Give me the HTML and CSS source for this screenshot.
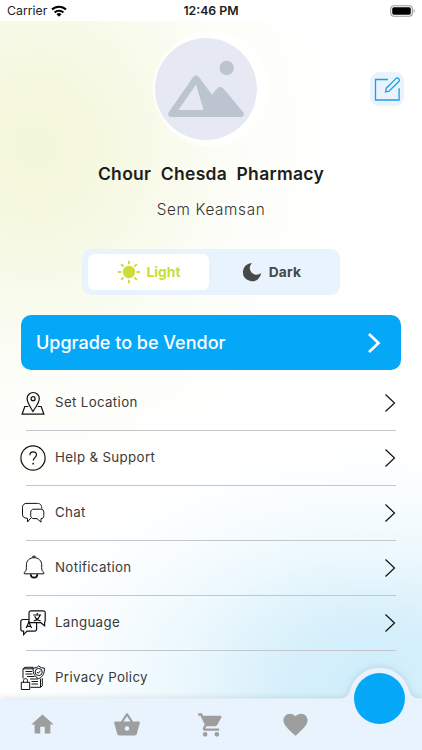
FILE: index.html
```html
<!DOCTYPE html>
<html lang="en" data-theme="light">
<head>
<meta charset="UTF-8" />
<meta name="viewport" content="width=device-width, initial-scale=1" />
<title>Profile</title>
<link rel="stylesheet" href="styles.css">
</head>
<body>
  <header class="status-bar">
    <div class="carrier">
      <span>Carrier</span>
      <svg width="16" height="12" viewBox="0 0 16 12" aria-hidden="true">
        <g fill="none" stroke="#000" stroke-width="2.1">
          <path d="M1 4.6a10 10 0 0 1 14 0"/>
          <path d="M3.6 7.5a6.3 6.3 0 0 1 8.8 0"/>
        </g>
        <path d="M8 11.7 5.5 9.2a3.600 3.600 0 0 1 5 0z"/>
      </svg>
    </div>
    <div class="clock">12:46 PM</div>
    <svg class="battery" width="26" height="12" viewBox="0 0 26 12" aria-hidden="true">
      <rect x=".7" y=".7" width="21.6" height="10.6" rx="3" fill="#fff" stroke="#999" stroke-width="1.1"/>
      <rect x="2.2" y="2.2" width="18.6" height="7.6" rx="1.7"/>
      <path d="M23.6 4v4c1.4-.6 1.4-3.4 0-4z" fill="#999"/>
    </svg>
  </header>

  <main class="content">
    <section class="profile">
      <div class="avatar">
        <svg width="102" height="102" viewBox="0 0 102 102" aria-hidden="true">
          <circle cx="51" cy="51" r="51" fill="#e6e9f3"/>
          <g fill="#bbc4cf">
            <circle cx="71.7" cy="30" r="7.2"/>
            <path fill-rule="evenodd" d="M16.5 79c-3 0-4.3-2.7-2.6-5L38 39.3c1.6-2.4 4.5-2.4 6.1 0L57 56.7l5.3-6.4c1.6-1.9 4.3-1.9 5.9 0L88 74c1.8 2.2.8 5-2.2 5zM23.4 72h25.2L41 46.5z"/>
          </g>
        </svg>
      </div>
      <button class="edit" aria-label="Edit profile">
        <svg width="28" height="28" viewBox="0 0 28 28" aria-hidden="true">
          <path d="M15 4.500H2.500V25h23.600V13.200"/>
          <path d="m12.500 16.800.8-3.600L22.900 3.600c1.800-1.700 4.700.8 2.900 2.900L16 16.100z"/>
        </svg>
      </button>
      <h1>Chour&nbsp; Chesda&nbsp; Pharmacy</h1>
      <p class="owner">Sem Keamsan</p>
    </section>

    <div class="theme-switch">
      <button class="theme light">
        <svg width="24" height="24" viewBox="0 0 24 24" aria-hidden="true">
          <circle cx="12" cy="12" r="6.200" fill="currentColor"/>
          <g stroke="currentColor" stroke-width="1.900" stroke-linecap="round">
            <path d="M12 1.600v2M12 20.400v2M1.600 12h2M20.400 12h2M4.600 4.600 6 6M18 18l1.400 1.400M4.600 19.400 6 18M18 6l1.400-1.400"/>
          </g>
        </svg>
        <span>Light</span>
      </button>
      <button class="theme dark">
        <svg width="20" height="20" viewBox="0 0 20 20" aria-hidden="true">
          <path d="M10 .9a9.200 9.200 0 1 0 9.200 10.200A6.400 6.400 0 0 1 10 .9z" fill="currentColor"/>
        </svg>
        <span>Dark</span>
      </button>
    </div>

    <a class="upgrade" href="#">
      <span>Upgrade to be Vendor</span>
      <svg width="14" height="22" viewBox="0 0 14 22" aria-hidden="true"><path d="m2 2 9.500 9L2 20"/></svg>
    </a>

    <nav class="menu">
      <a href="#">
        <svg class="icon" viewBox="0 0 26 26" aria-hidden="true">
          <path d="M13 21.500C10.500 17 7.100 13 7.100 8.600a6.100 6.100 0 0 1 12.200 0C19.300 13 15.500 17 13 21.500z"/>
          <circle cx="13.100" cy="8.700" r="2"/>
          <path d="M8.300 16.500H4.800L2.100 24.200h21.800l-2.700-7.700h-3.500"/>
        </svg>
        <span>Set Location</span>
        <svg class="chevron" viewBox="0 0 12 20" aria-hidden="true"><path d="m1.500 1.500 9 8.500-9 8.500"/></svg>
      </a>
      <a href="#">
        <svg class="icon" viewBox="0 0 26 26" aria-hidden="true">
          <circle cx="13" cy="13" r="12.100"/>
          <path d="M9.900 10.200c0-4.500 6.600-4.300 6.600-.4 0 2.600-3.200 2.700-3.200 5.800"/>
          <circle class="solid" cx="13.200" cy="18.700" r=".9"/>
        </svg>
        <span>Help &amp; Support</span>
        <svg class="chevron" viewBox="0 0 12 20" aria-hidden="true"><path d="m1.500 1.500 9 8.500-9 8.500"/></svg>
      </a>
      <a href="#">
        <svg class="icon thin" viewBox="0 0 26 26" aria-hidden="true">
          <path d="M10.800 18 7.500 22v-3.700c-3.400 0-5-1.300-5-4.100V7.500c0-2.800 1.600-4.100 4.500-4.100h10.500c2.700 0 4.300 1.500 4.300 5.300"/>
          <path d="M14 9.200h6.600c2.100 0 3.200 1 3.200 3v3.400c0 2-.9 3-2.800 3v3.600l-4-3.600h-3c-2.100 0-3.300-1-3.300-3v-3.400c0-2 1.200-3 3.300-3z"/>
        </svg>
        <span>Chat</span>
        <svg class="chevron" viewBox="0 0 12 20" aria-hidden="true"><path d="m1.500 1.500 9 8.500-9 8.500"/></svg>
      </a>
      <a href="#">
        <svg class="icon thin" viewBox="0 0 26 26" aria-hidden="true">
          <path d="M12.800 2.700V1.200h2.400v1.500M4.300 18.800v-1.500c1.800-1.100 2.100-2.500 2.100-4.900V9.900c0-4.300 3.200-7.200 7.600-7.200s7.700 2.900 7.700 7.200v2.500c0 2.400.3 3.800 2.100 4.900v1.500z"/>
          <path class="bold" d="M10.700 19.200c.2 4.500 6.500 4.500 6.700 0"/>
        </svg>
        <span>Notification</span>
        <svg class="chevron" viewBox="0 0 12 20" aria-hidden="true"><path d="m1.500 1.500 9 8.500-9 8.500"/></svg>
      </a>
      <a href="#">
        <svg class="icon" viewBox="0 0 26 26" aria-hidden="true">
          <path d="M16.600 12.700h4.200l3.800 3v-3.500c.5-.4.600-1 .6-1.600V3c0-1.400-.7-2.100-2.200-2.100H11.200C9.700.9 9 1.600 9 3v6.500M9 9.500H3C1.500 9.500.8 10.200.8 11.600V19c0 1.400.7 2.100 2.200 2.100h.6v3.500L7 21.100h7.400c1.500 0 2.200-.7 2.200-2.100v-6.300H9z"/>
          <path d="m6.200 18 2.700-6 2.600 6M7.200 16.300h3.500M13.200 5h8M17.200 3v2M20 5c-.8 3-3 5-6.200 6M14.700 6.200c1 2.400 3 4 6 4.800"/>
        </svg>
        <span>Language</span>
        <svg class="chevron" viewBox="0 0 12 20" aria-hidden="true"><path d="m1.500 1.500 9 8.500-9 8.500"/></svg>
      </a>
      <a href="#">
        <svg class="icon thin" viewBox="0 0 26 26" aria-hidden="true">
          <path d="M3 13.500V3.800h10.500M20.500 13.800v8.500H10.500M3 3.800l2-1.500h8.500M20.500 22.300l1.800-1.500v-7.700"/>
          <path d="M5.500 6.500h6.700M5.500 9h7M7 11.500h7.500M10 14h8M11.500 16.500h6.500M11.500 19h6.500"/>
          <path d="M18.700 1c1.800 1.500 3.500 2 5.700 2.100.2 5-1.300 8.500-5.700 10.600-4.300-2.100-5.800-5.600-5.600-10.600C15.300 3 17 2.500 18.700 1z"/>
          <circle cx="18.700" cy="7" r="3.600"/>
          <path d="m17 7 1.300 1.300 2.300-2.600"/>
          <path class="lock" d="M1.300 17.300h8.400v7.200H1.300zM3.500 17.100v-1.600c0-2.500 4-2.500 4 0v1.600"/>
        </svg>
        <span>Privacy Policy</span>
        <svg class="chevron" viewBox="0 0 12 20" aria-hidden="true"><path d="m1.500 1.500 9 8.500-9 8.500"/></svg>
      </a>
    </nav>
  </main>

  <footer class="tab-bar">
    <svg class="tab-shape" width="422" height="82" viewBox="0 0 422 82" aria-hidden="true">
      <path d="M0 30.500h338c7 0 10-2.500 11.900-7.500a30.500 30.500 0 0 1 59.200 0c1.900 5 5 7.500 12.900 7.500V82H0z"/>
    </svg>
    <a class="tab" href="#" aria-label="Home">
      <svg width="27" height="27" viewBox="0 0 24 24"><path d="M10 20v-6h4v6h5v-8h3L12 3 2 12h3v8z"/></svg>
    </a>
    <a class="tab" href="#" aria-label="Shop">
      <svg width="28" height="28" viewBox="0 0 24 24"><path d="M17.21 9l-4.38-6.56a.99.99 0 0 0-1.66.01L6.79 9H2c-.55 0-1 .45-1 1 0 .09.01.18.04.27l2.54 9.27c.23.84 1 1.46 1.92 1.46h13c.92 0 1.69-.62 1.93-1.46l2.54-9.27L23 10c0-.55-.45-1-1-1zM9 9l3-4.4L15 9zm3 8a2 2 0 1 1 0-4 2 2 0 0 1 0 4z"/></svg>
    </a>
    <a class="tab" href="#" aria-label="Cart">
      <svg width="28" height="28" viewBox="0 0 24 24"><path d="M7 18a2 2 0 1 0 0 4 2 2 0 0 0 0-4zM1 2v2h2l3.600 7.590-1.350 2.450C4.520 15.370 5.480 17 7 17h12v-2H7.420a.25.25 0 0 1-.22-.37L8.100 13h7.450c.75 0 1.410-.41 1.750-1.030l3.580-6.490A1 1 0 0 0 20 4H5.210l-.94-2zm16 16a2 2 0 1 0 0 4 2 2 0 0 0 0-4z"/></svg>
    </a>
    <a class="tab" href="#" aria-label="Favourites">
      <svg width="29" height="29" viewBox="0 0 24 24"><path d="M12 21.350l-1.450-1.320C5.400 15.360 2 12.280 2 8.500 2 5.420 4.420 3 7.500 3c1.740 0 3.410.81 4.500 2.090C13.090 3.810 14.760 3 16.500 3 19.580 3 22 5.420 22 8.500c0 3.780-3.400 6.860-8.550 11.540z"/></svg>
    </a>
    <a class="tab active" href="#" aria-label="Profile"></a>
  </footer>
</body>
</html>
```
FILE: styles.css
```css
:root {
  --blue: #05a8f7;
  --pale-blue: #e8f3fe;
  --lime: #cddc39;
  --text: #1d1d1d;
  --grey: #9e9e9e;
}
* {
  box-sizing: border-box;
}
html, body {
  height: 100%;
  margin: 0;
}
body {
  display: flex;
  flex-direction: column;
  overflow: hidden;
  font-family: Inter, Roboto, sans-serif;
  color: var(--text);
  background: #fff;
}
a {
  color: inherit;
  text-decoration: none;
}
button {
  border: none;
  padding: 0;
  font: inherit;
}
svg {
  display: block;
  flex: none;
}
.status-bar {
  display: grid;
  grid-template-columns: 1fr auto 1fr;
  align-items: center;
  height: 21px;
  padding: 0 7px;
  font-size: 12.3px;
}
.carrier {
  display: flex;
  align-items: center;
  gap: 4px;
}
.clock {
  font-weight: 600;
}
.battery {
  justify-self: end;
  margin-right: -1px;
}
.content {
  flex: 1;
  min-height: 0;
  overflow: hidden;
  padding: 0 21px;
  background:
    radial-gradient(ellipse 310px 350px at 35px 125px, #f3f7d9 0, #f5f8df 20%, rgba(248, 250, 233, .9) 42%, rgba(252, 253, 246, .8) 65%, rgba(255, 255, 255, 0) 100%),
    radial-gradient(ellipse 370px 240px at 375px 660px, #cdeefb 0, #d7f0fb 25%, #ebf8fd 52%, #f9fdff 78%, #fff 100%);
}
.profile {
  position: relative;
  display: flex;
  flex-direction: column;
  align-items: center;
  height: 228px;
  padding-top: 10px;
}
.avatar {
  width: 116px;
  height: 116px;
  padding: 7px 0 0 2px;
  border-radius: 50%;
  background: rgba(255, 255, 255, .7);
}
.edit {
  position: absolute;
  top: 51px;
  right: -3px;
  display: flex;
  align-items: center;
  justify-content: center;
  width: 34px;
  height: 34px;
  border-radius: 9px;
  background: var(--pale-blue);
}
.edit path {
  fill: none;
  stroke: #1e9fe0;
  stroke-width: 1.3;
}
h1 {
  margin: 14px 0 0;
  font-size: 17.5px;
  font-weight: 600;
  line-height: 26px;
  letter-spacing: .3px;
}
.owner {
  margin: 11px 0 0;
  font-size: 15.3px;
  font-weight: 300;
  line-height: 24px;
  letter-spacing: .65px;
  color: #333;
}
.theme-switch {
  display: flex;
  width: 258px;
  height: 46px;
  margin: 0 auto;
  padding: 5px 6px;
  border-radius: 9px;
  background: var(--pale-blue);
}
.theme {
  display: flex;
  flex: 1;
  align-items: center;
  justify-content: center;
  gap: 6px;
  border-radius: 6px;
  font-size: 13.8px;
  font-weight: 700;
  background: transparent;
}
.theme.light {
  flex: none;
  width: 121px;
  color: var(--lime);
  background: #fff;
}
.theme.dark {
  gap: 7px;
  color: #484848;
  letter-spacing: .2px;
}
.upgrade {
  display: flex;
  align-items: center;
  justify-content: space-between;
  height: 55px;
  margin-top: 20px;
  padding: 0 20px 0 15px;
  border-radius: 10px;
  color: #fff;
  font-size: 18px;
  font-weight: 500;
  background: var(--blue);
}
.upgrade path {
  fill: none;
  stroke: #fff;
  stroke-width: 2.7;
}
.menu {
  display: flex;
  flex-direction: column;
  padding-top: 5px;
}
.menu a {
  position: relative;
  display: flex;
  align-items: center;
  height: 55px;
  padding: 0 5px 0 0;
  font-size: 13.3px;
  font-weight: 400;
  color: #3a3a3a;
}
.menu a::after {
  content: "";
  position: absolute;
  left: 5px;
  right: 5px;
  bottom: -1px;
  height: 1px;
  background: #c4c7ca;
}
.menu span {
  flex: 1;
  margin: -1px 0 0 9px;
  letter-spacing: .35px;
}
.icon {
  width: 26px;
  height: 26px;
  margin-left: -1px;
  fill: none;
  stroke: #111;
  stroke-width: 1.2;
}
.icon.thin {
  stroke-width: 1;
}
.icon .bold {
  stroke-width: 1.8;
}
.icon .lock {
  fill: #fff;
}
.icon .solid {
  fill: #111;
  stroke: none;
}
.chevron {
  width: 12px;
  height: 20px;
  fill: none;
  stroke: #111;
  stroke-width: 1.2;
}
.tab-bar {
  position: relative;
  display: grid;
  grid-template-columns: repeat(5, 1fr);
  align-items: center;
  height: 51px;
}
.tab-shape {
  position: absolute;
  left: 0;
  bottom: 0;
  fill: var(--pale-blue);
  filter: drop-shadow(0 -1px 3px rgba(0, 0, 0, .1));
  overflow: visible;
}
.tab {
  position: relative;
  display: flex;
  justify-content: center;
  fill: var(--grey);
}
.tab.active {
  align-self: start;
  justify-self: center;
  width: 51px;
  height: 51px;
  margin-top: -26px;
  border-radius: 50%;
  background: var(--blue);
}
```
